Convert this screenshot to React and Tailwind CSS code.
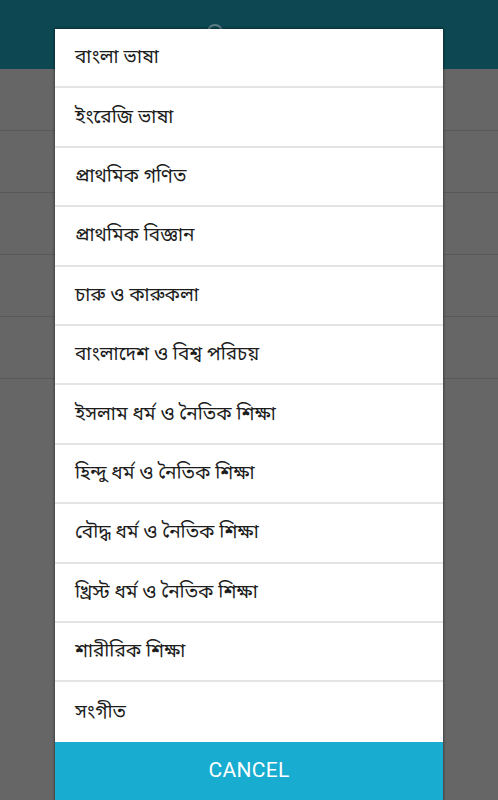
import React from "react";

const items = [
  "বাংলা ভাষা",
  "ইংরেজি ভাষা",
  "প্রাথমিক গণিত",
  "প্রাথমিক বিজ্ঞান",
  "চারু ও কারুকলা",
  "বাংলাদেশ ও বিশ্ব পরিচয়",
  "ইসলাম ধর্ম ও নৈতিক শিক্ষা",
  "হিন্দু ধর্ম ও নৈতিক শিক্ষা",
  "বৌদ্ধ ধর্ম ও নৈতিক শিক্ষা",
  "খ্রিস্ট ধর্ম ও নৈতিক শিক্ষা",
  "শারীরিক শিক্ষা",
  "সংগীত",
];

export default function App() {
  return (
    <div className="relative w-[498px] h-[800px] overflow-hidden bg-[#666666]">
      {/* dimmed background screen */}
      <div className="flex flex-col">
        <div className="relative h-[69px] bg-[#0c4752]">
          <div className="absolute left-[207px] top-[24px] w-[16px] h-[16px] rounded-full border-2 border-[#5b7d84]" />
        </div>
        {[0, 1, 2, 3, 4].map((i) => (
          <div key={i} className="h-[62px] border-b border-[#595959]" />
        ))}
      </div>

      {/* dialog */}
      <div className="absolute left-[55px] top-[29px] w-[388px] flex flex-col bg-white shadow-[0_0_2px_1px_rgba(0,0,0,0.35)]">
        {items.map((t, i) => (
          <div
            key={i}
            className={`h-[59.42px] flex items-center pl-[20px] pt-[2px] ${i < items.length - 1 ? "border-b-2 border-[#e4e4e4]" : ""}`}
          >
            <span
              className="text-[19px] text-[#1c1c1c] leading-none"
              style={{ fontFamily: '"Noto Sans Bengali", "Noto Sans", sans-serif' }}
            >
              {t}
            </span>
          </div>
        ))}
        <div className="h-[58px] bg-[#17acd0] flex items-center justify-center">
          <span className="text-white text-[21px] font-['Roboto',sans-serif] tracking-[0.3px]">CANCEL</span>
        </div>
      </div>
    </div>
  );
}
